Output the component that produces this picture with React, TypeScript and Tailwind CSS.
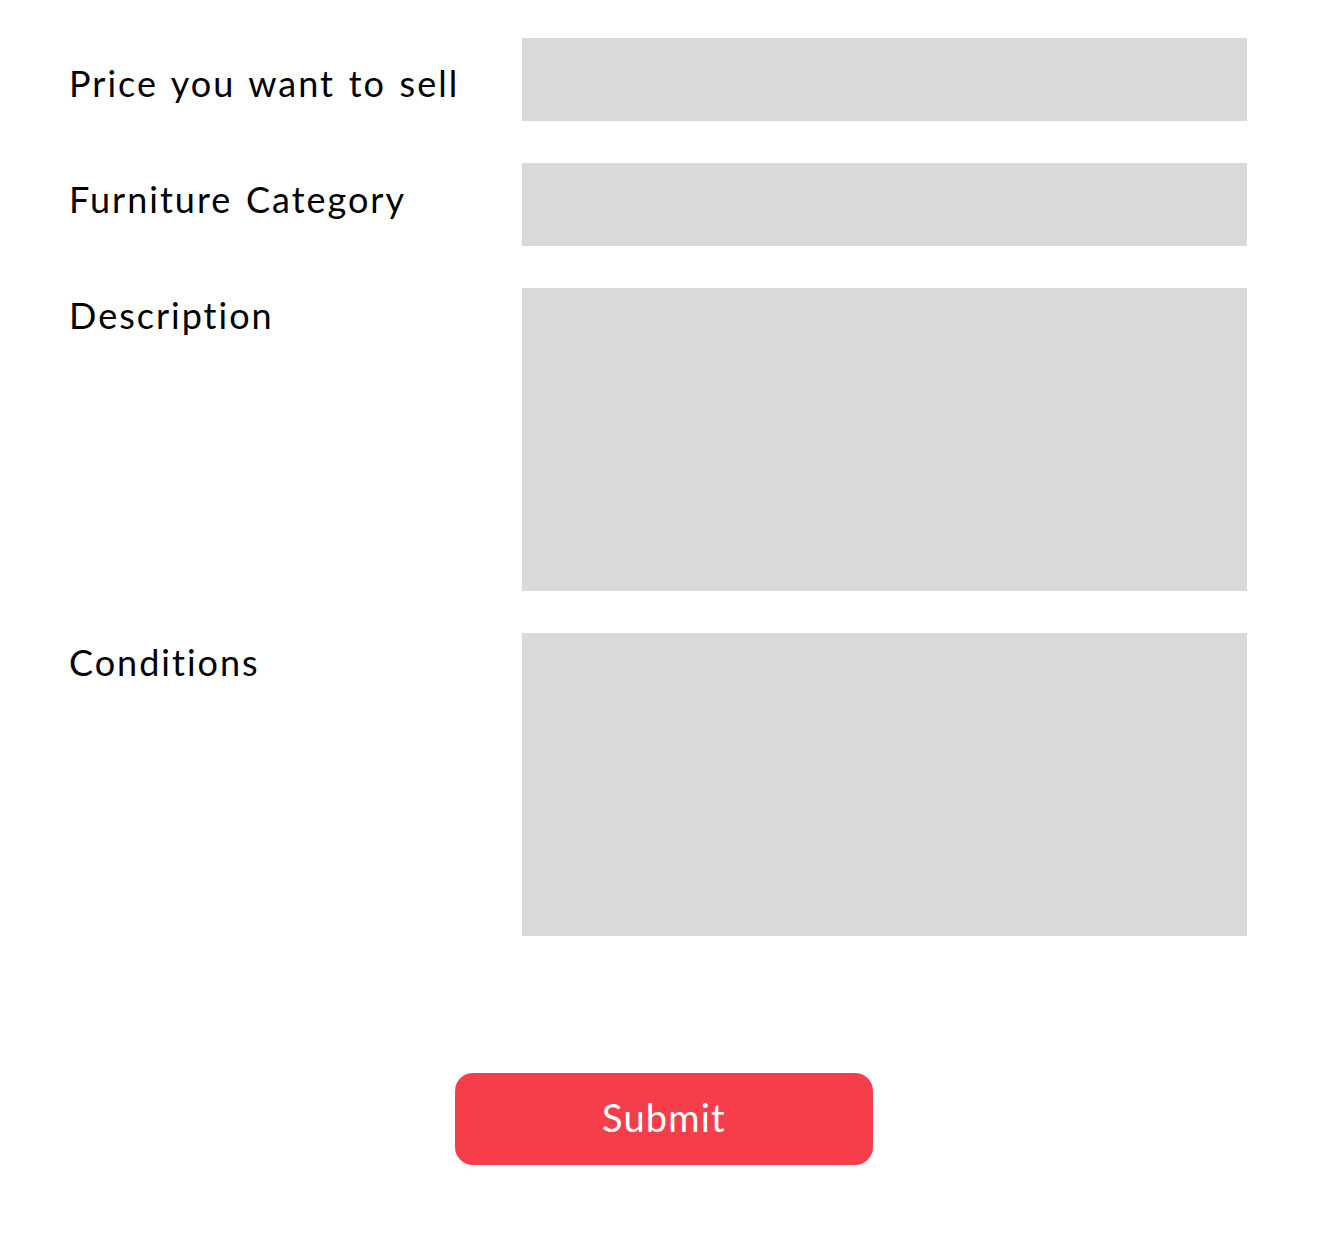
export default function App() {
  const rows = [
    { label: "Price you want to sell", h: "h-[83px]", mt: "mt-[24px]" },
    { label: "Furniture Category", h: "h-[83px]", mt: "mt-[15px]" },
    { label: "Description", h: "h-[303px]", mt: "mt-[6px]" },
    { label: "Conditions", h: "h-[303px]", mt: "mt-[8px]" },
  ];

  return (
    <main className="min-h-screen bg-white font-['Lato',sans-serif] text-black pt-[38px] pl-[69px]">
      <div className="flex flex-col gap-[42px]">
        {rows.map((row) => (
          <div key={row.label} className="flex items-start">
            <label
              className={`w-[453px] shrink-0 text-[36px] leading-[43px] tracking-[2px] [word-spacing:2.5px] ${row.mt}`}
            >
              {row.label}
            </label>
            <div className={`w-[725px] bg-[#d9d9d9] ${row.h}`}></div>
          </div>
        ))}
      </div>
      <div className="flex mt-[137px] ml-[386px]">
        <button className="w-[418px] h-[92px] rounded-[18px] bg-[#f63e4b] text-white text-[38px] tracking-[1.2px] pb-[4px]">
          Submit
        </button>
      </div>
    </main>
  );
}
